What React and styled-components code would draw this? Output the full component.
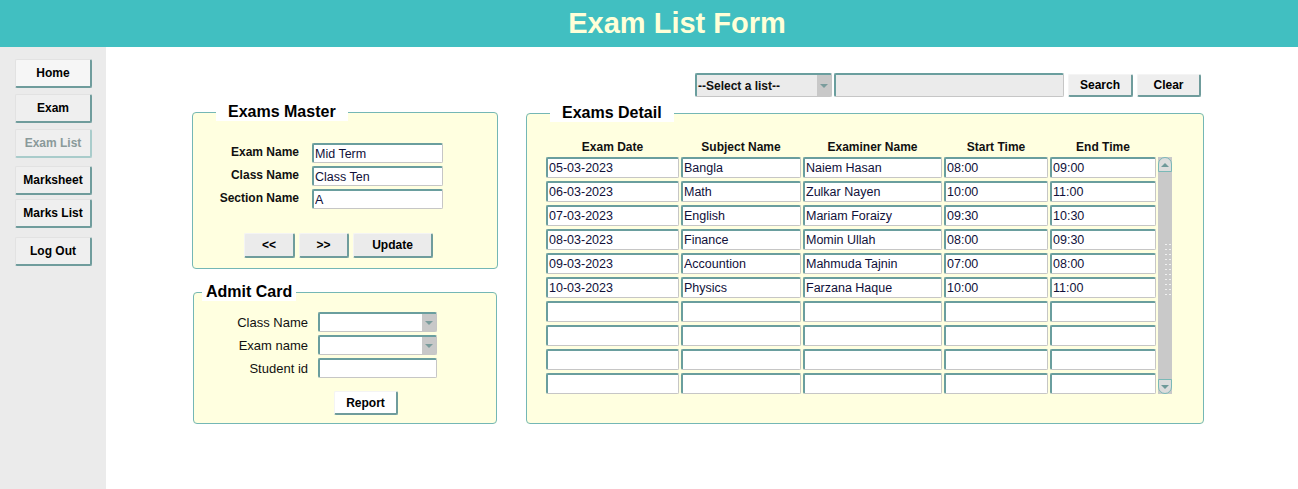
import React from 'react';
import styled, { createGlobalStyle } from 'styled-components';

const GlobalStyle = createGlobalStyle`
    html, body, #root {
        margin: 0;
        height: 100%;
    }
    body {
        font-family: "Liberation Sans", Arial, sans-serif;
        background: #ffffff;
    }
`;

const Page = styled.div`
    min-height: 100vh;
    display: flex;
    flex-direction: column;
`;

const Header = styled.header`
    height: 47px;
    background: #41bfc1;
    color: #ffffd8;
    font-size: 29px;
    font-weight: bold;
    line-height: 47px;
    text-align: center;
    padding-left: 56px;
`;

const Body = styled.div`
    flex: 1;
    display: flex;
`;

const Sidebar = styled.nav`
    width: 106px;
    background: #ebebeb;
    padding: 12px 0 0 15px;
    box-sizing: border-box;
    display: flex;
    flex-direction: column;
    align-items: flex-start;
`;

const NavButton = styled.button`
    width: 77px;
    height: 29px;
    margin-top: ${p => p.$gap || 0}px;
    padding: 0;
    background: ${p => p.$light ? '#f6f6f6' : '#efefef'};
    border-style: solid;
    border-width: 1px 2px 2px 1px;
    border-color: #e2e2e2 ${p => p.disabled ? '#a9cccb' : '#6f9c9c'} ${p => p.disabled ? '#a9cccb' : '#6f9c9c'} #e2e2e2;
    border-radius: 2px;
    font-family: inherit;
    font-size: 12px;
    font-weight: bold;
    color: ${p => p.disabled ? '#8a9a9a' : '#000'};
`;

const Main = styled.main`
    flex: 1;
    padding: 26px 0 0 86px;
    display: grid;
    grid-template-columns: 306px 678px;
    grid-template-rows: 24px auto;
    column-gap: 28px;
    row-gap: 6px;
    align-content: start;
`;

const Toolbar = styled.div`
    grid-column: 2;
    display: flex;
    justify-content: flex-end;
    align-items: flex-end;
    gap: 4px;
    padding-right: 3px;
`;

const FieldGroup = styled.div`
    display: flex;
    gap: 2px;
`;

const Combo = styled.div`
    width: ${p => p.$w}px;
    height: ${p => p.$h || 20}px;
    box-sizing: border-box;
    display: flex;
    align-items: stretch;
    background: ${p => p.$bg || '#fff'};
    border-style: solid;
    border-width: 2px 1px 1px 2px;
    border-color: #6a9e9e #c6c6c6 #c6c6c6 #6a9e9e;
    border-radius: 2px;
`;

const ComboText = styled.span`
    flex: 1;
    padding-left: 1px;
    display: flex;
    align-items: center;
    font-size: 12px;
    font-weight: bold;
    color: #111;
`;

const ComboArrow = styled.span`
    width: 14px;
    background: #c8c8c8;
    display: flex;
    align-items: center;
    justify-content: center;
    &::after {
        content: '';
        border-left: 4px solid transparent;
        border-right: 4px solid transparent;
        border-top: 4px solid #7a9c9c;
    }
`;

const Field = styled.input`
    width: ${p => p.$w}px;
    height: ${p => p.$h || 20}px;
    box-sizing: border-box;
    margin: 0;
    padding: 0 0 0 1px;
    background: ${p => p.$bg || '#fff'};
    border-style: solid;
    border-width: 2px 1px 1px 2px;
    border-color: #6a9e9e #c6c6c6 #c6c6c6 #6a9e9e;
    border-radius: 2px;
    font-family: inherit;
    font-size: 12.5px;
    color: #10103a;
    outline: none;
`;

const Button = styled.button`
    width: ${p => p.$w}px;
    height: ${p => p.$h || 25}px;
    margin: 0;
    padding: 0;
    background: ${p => p.$bg || '#ebebeb'};
    border-style: solid;
    border-width: 1px 2px 2px 1px;
    border-color: #f4f4f4 #6f9c9c #6f9c9c #f4f4f4;
    border-radius: 2px;
    font-family: inherit;
    font-size: 12px;
    font-weight: bold;
    color: #000;
`;

const Column = styled.div`
    display: flex;
    flex-direction: column;
    align-items: flex-start;
`;

const Frame = styled.fieldset`
    width: ${p => p.$w}px;
    box-sizing: border-box;
    min-width: 0;
    margin: ${p => p.$mt || 0}px 0 0 ${p => p.$ml || 0}px;
    padding: ${p => p.$pad};
    background: #ffffe0;
    border: 1px solid #74b7b5;
    border-radius: 4px;
`;

const Legend = styled.legend`
    margin-left: ${p => p.$ml}px;
    padding: 0 ${p => p.$px}px;
    background: #fff;
    font-size: 16px;
    font-weight: bold;
    line-height: 18px;
    color: #000;
`;

const FormGrid = styled.div`
    display: grid;
    grid-template-columns: ${p => p.$label}px auto;
    column-gap: ${p => p.$gap}px;
    row-gap: 3px;
    align-items: ${p => p.$align || 'center'};
`;

const Label = styled.label`
    text-align: right;
    font-size: ${p => p.$bold ? 12 : 13}px;
    font-weight: ${p => p.$bold ? 'bold' : 'normal'};
    line-height: ${p => p.$bold ? '19px' : 'normal'};
    color: #111;
`;

const ButtonRow = styled.div`
    display: flex;
    gap: 4px;
    margin: ${p => p.$mt}px 0 0 ${p => p.$ml}px;
`;

const Table = styled.div`
    display: grid;
    grid-template-columns: 133px 120px 139px 104px 106px 14px;
    grid-template-rows: 14px repeat(10, 21px);
    column-gap: 2px;
    row-gap: 3px;
`;

const HeadCell = styled.div`
    text-align: center;
    font-size: 12px;
    font-weight: bold;
    line-height: 14px;
    color: #111;
`;

const Scrollbar = styled.div`
    grid-column: 6;
    grid-row: 2 / span 10;
    display: flex;
    flex-direction: column;
    background: #c9c9c9;
`;

const ScrollButton = styled.div`
    height: 15px;
    box-sizing: border-box;
    background: #dcdcdc;
    border: 1px solid #7ab9b7;
    border-radius: ${p => p.$down ? '0 0 7px 7px' : '7px 7px 0 0'};
    display: flex;
    align-items: center;
    justify-content: center;
    &::after {
        content: '';
        border-left: 4px solid transparent;
        border-right: 4px solid transparent;
        ${p => p.$down ? 'border-top' : 'border-bottom'}: 4px solid #6f9999;
    }
`;

const Track = styled.div`
    flex: 1;
    padding: 70px 1px 0 6px;
`;

const Grip = styled.div`
    height: 54px;
    background-image: radial-gradient(circle, #f0f0f0 0.7px, transparent 1.1px);
    background-size: 4px 5px;
`;

const exams = [
    ['05-03-2023', 'Bangla', 'Naiem Hasan', '08:00', '09:00'],
    ['06-03-2023', 'Math', 'Zulkar Nayen', '10:00', '11:00'],
    ['07-03-2023', 'English', 'Mariam Foraizy', '09:30', '10:30'],
    ['08-03-2023', 'Finance', 'Momin Ullah', '08:00', '09:30'],
    ['09-03-2023', 'Accountion', 'Mahmuda Tajnin', '07:00', '08:00'],
    ['10-03-2023', 'Physics', 'Farzana Haque', '10:00', '11:00'],
];

const columns = ['Exam Date', 'Subject Name', 'Examiner Name', 'Start Time', 'End Time'];
const widths = [133, 120, 139, 104, 106];

const rows = Array.from({ length: 10 }, (_, i) => exams[i] || ['', '', '', '', '']);

// legend offset is counted from the fieldset padding, hence the small margin here
const ExamsDetail = () => (
    <Frame $w={678} $mt={1} $pad="18px 0 24px 19px">
        <Legend $ml={4} $px={12}>Exams Detail</Legend>
        <Table>
            {columns.map(c => <HeadCell key={c}>{c}</HeadCell>)}
            <HeadCell />
            {rows.map((row, r) => row.map((v, c) => (
                <Field key={`${r}-${c}`} $w={widths[c]} $h={21} readOnly value={v} />
            )))}
            <Scrollbar>
                <ScrollButton />
                <Track><Grip /></Track>
                <ScrollButton $down />
            </Scrollbar>
        </Table>
    </Frame>
);

export default function App() {
    return (
        <Page>
            <GlobalStyle />
            <Header>Exam List Form</Header>
            <Body>
                <Sidebar>
                    <NavButton $light>Home</NavButton>
                    <NavButton $gap={6}>Exam</NavButton>
                    <NavButton $gap={6} disabled>Exam List</NavButton>
                    <NavButton $gap={8}>Marksheet</NavButton>
                    <NavButton $gap={4}>Marks List</NavButton>
                    <NavButton $gap={9}>Log Out</NavButton>
                </Sidebar>
                <Main>
                    <Toolbar>
                        <FieldGroup>
                            <Combo $w={137} $h={24} $bg="#ebebeb">
                                <ComboText>--Select a list--</ComboText>
                                <ComboArrow />
                            </Combo>
                            <Field $w={230} $h={24} $bg="#ebebeb" readOnly value="" />
                        </FieldGroup>
                        <Button $w={65} $h={23} $bg="#eeeeee">Search</Button>
                        <Button $w={64} $h={23} $bg="#eeeeee">Clear</Button>
                    </Toolbar>
                    <Column>
                        <Frame $w={306} $pad="22px 0 10px 0">
                            <Legend $ml={23} $px={12}>Exams Master</Legend>
                            <FormGrid $label={106} $gap={13} $align="start">
                                <Label $bold>Exam Name</Label>
                                <Field $w={131} readOnly value="Mid Term" />
                                <Label $bold>Class Name</Label>
                                <Field $w={131} readOnly value="Class Ten" />
                                <Label $bold>Section Name</Label>
                                <Field $w={131} readOnly value="A" />
                            </FormGrid>
                            <ButtonRow $mt={24} $ml={51}>
                                <Button $w={51}>&lt;&lt;</Button>
                                <Button $w={50}>&gt;&gt;</Button>
                                <Button $w={80}>Update</Button>
                            </ButtonRow>
                        </Frame>
                        <Frame $w={304} $mt={14} $ml={1} $pad="11px 0 8px 0">
                            <Legend $ml={8} $px={4}>Admit Card</Legend>
                            <FormGrid $label={114} $gap={10}>
                                <Label>Class Name</Label>
                                <Combo $w={119}><ComboText /><ComboArrow /></Combo>
                                <Label>Exam name</Label>
                                <Combo $w={119}><ComboText /><ComboArrow /></Combo>
                                <Label>Student id</Label>
                                <Field $w={119} readOnly value="" />
                            </FormGrid>
                            <ButtonRow $mt={13} $ml={140}>
                                <Button $w={64} $h={24} $bg="#ffffff">Report</Button>
                            </ButtonRow>
                        </Frame>
                    </Column>
                    <ExamsDetail />
                </Main>
            </Body>
        </Page>
    );
}
